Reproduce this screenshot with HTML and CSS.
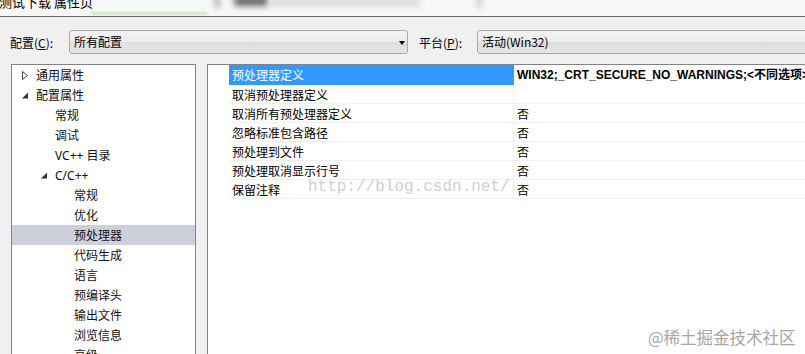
FILE: index.html
```html
<!DOCTYPE HTML>
<html>
<head>
    <title>测试下载 属性页</title>
    <link rel="stylesheet" href="styles.css">
</head>
<body>
    <div id="titlebar">
        <span class="title">测试下载 属性页</span>
        <span class="smudge s1"></span>
        <span class="smudge s2"></span>
        <span class="smudge s3"></span>
        <span class="smudge s4"></span>
        <span class="smudge green"></span>
    </div>

    <div id="configbar">
        <label class="lbl lbl-config">配置(<u>C</u>):</label>
        <div class="combo combo-config">
            <span>所有配置</span>
            <i class="arrow"></i>
        </div>
        <label class="lbl lbl-platform">平台(<u>P</u>):</label>
        <div class="combo combo-platform">
            <span>活动(Win32)</span>
            <i class="arrow"></i>
        </div>
    </div>

    <div id="main">
        <div id="tree">
            <div class="node lv1"><svg class="tri" width="8" height="9" viewBox="0 0 8 9"><path d="M1.5 0.5 L6.5 4.5 L1.5 8.5 Z" fill="none" stroke="#444" stroke-width="1"/></svg>通用属性</div>
            <div class="node lv1"><svg class="tri" width="8" height="9" viewBox="0 0 8 9"><path d="M7 1.5 L7 7.5 L1 7.5 Z" fill="#333"/></svg>配置属性</div>
            <div class="node lv2">常规</div>
            <div class="node lv2">调试</div>
            <div class="node lv2">VC++ 目录</div>
            <div class="node lv2 open"><svg class="tri" width="8" height="9" viewBox="0 0 8 9"><path d="M7 1.5 L7 7.5 L1 7.5 Z" fill="#333"/></svg>C/C++</div>
            <div class="node lv3">常规</div>
            <div class="node lv3">优化</div>
            <div class="node lv3 selected">预处理器</div>
            <div class="node lv3">代码生成</div>
            <div class="node lv3">语言</div>
            <div class="node lv3">预编译头</div>
            <div class="node lv3">输出文件</div>
            <div class="node lv3">浏览信息</div>
            <div class="node lv3">高级</div>
        </div>

        <div id="grid">
            <div class="row active">
                <div class="name">预处理器定义</div>
                <div class="value bold">WIN32;_CRT_SECURE_NO_WARNINGS;&lt;不同选项&gt;</div>
            </div>
            <div class="row">
                <div class="name">取消预处理器定义</div>
                <div class="value"></div>
            </div>
            <div class="row">
                <div class="name">取消所有预处理器定义</div>
                <div class="value">否</div>
            </div>
            <div class="row">
                <div class="name">忽略标准包含路径</div>
                <div class="value">否</div>
            </div>
            <div class="row">
                <div class="name">预处理到文件</div>
                <div class="value">否</div>
            </div>
            <div class="row">
                <div class="name">预处理取消显示行号</div>
                <div class="value">否</div>
            </div>
            <div class="row">
                <div class="name">保留注释</div>
                <div class="value">否</div>
            </div>
        </div>
    </div>

    <div class="mark-csdn">http://blog.csdn.net/</div>
    <div class="mark-juejin">@稀土掘金技术社区</div>
</body>
</html>
```

FILE: styles.css
```css
html, body {
    margin: 0;
    padding: 0;
    height: 100%;
    overflow: hidden;
}

body {
    background: #f0f0f0;
    font-family: "Noto Sans", "Noto Sans CJK SC", sans-serif;
    font-size: 12px;
    color: #000;
    position: relative;
}

#titlebar {
    height: 16px;
    border-bottom: 1px solid #6b6b6b;
    background: #f7f7f7;
    position: relative;
    overflow: hidden;
}

#titlebar .title {
    display: block;
    font-family: "Noto Sans CJK SC", sans-serif;
    font-size: 13px;
    line-height: 13px;
    margin-top: -5px;
    margin-left: -1px;
}

.smudge {
    position: absolute;
    filter: blur(3px);
    border-radius: 3px;
}

.s1 {
    left: 216px;
    top: -4px;
    width: 3px;
    height: 12px;
    background: #777;
}

.s2 {
    left: 234px;
    top: -4px;
    width: 34px;
    height: 10px;
    background: #666;
}

.s3 {
    left: 270px;
    top: -2px;
    width: 150px;
    height: 9px;
    background: #dcdcdc;
}

.s4 {
    left: 478px;
    top: -4px;
    width: 3px;
    height: 12px;
    background: #aaa;
}

.green {
    left: 90px;
    top: 12px;
    width: 118px;
    height: 3px;
    background: #cfe3c8;
    filter: blur(1px);
}

#configbar {
    display: flex;
    align-items: center;
    height: 24px;
    margin-top: 13px;
}

#configbar > * {
    flex-shrink: 0;
}

.lbl {
    font-family: "Noto Sans CJK SC", sans-serif;
    font-size: 12px;
}

.lbl-config {
    margin-left: 10px;
    width: 59px;
}

.lbl-platform {
    margin-left: 11px;
    width: 58px;
}

.combo {
    height: 22px;
    border: 1px solid #a8a8a8;
    border-radius: 3px;
    background: linear-gradient(#f3f3f3, #ebebeb 50%, #dddddd 51%, #e6e6e6);
    display: flex;
    align-items: center;
    padding-left: 4px;
    position: relative;
    box-sizing: content-box;
}

.combo span {
    font-family: "Noto Sans CJK SC", sans-serif;
    font-size: 12px;
    line-height: 22px;
}

.combo-config {
    width: 333px;
}

.combo-platform {
    width: 340px;
}

.arrow {
    position: absolute;
    right: 2px;
    top: 10px;
    border-left: 3.5px solid transparent;
    border-right: 3.5px solid transparent;
    border-top: 4px solid #000;
}

#main {
    display: flex;
    margin-top: 10px;
    height: 300px;
}

#tree {
    margin-left: 11px;
    width: 183px;
    flex-shrink: 0;
    border: 1px solid #828282;
    background: #fff;
    overflow: hidden;
}

.node {
    height: 20px;
    line-height: 21px;
    font-family: "Noto Sans", "Noto Sans CJK SC", sans-serif;
    font-size: 12px;
    white-space: nowrap;
    position: relative;
    color: #111;
}

.tri {
    position: absolute;
    top: 6px;
}

.lv1 {
    padding-left: 24px;
}

.lv1 .tri {
    left: 9px;
}

.lv2 {
    padding-left: 43px;
}

.lv2 .tri {
    left: 28px;
}

.lv3 {
    padding-left: 62px;
}

.selected {
    background: #cdd0dc;
}

#grid {
    margin-left: 11px;
    flex: 1;
    border: 1px solid #828282;
    border-right: none;
    background: #fff;
    padding-left: 21px;
    overflow: hidden;
}

.row {
    display: flex;
    height: 18px;
    border-bottom: 1px solid #efefef;
    line-height: 19px;
}

.row.active {
    height: 20px;
    line-height: 20px;
    border-bottom: none;
}

.name {
    width: 281px;
    padding-left: 3px;
    border-right: 1px solid #efefef;
    font-family: "Noto Sans CJK SC", sans-serif;
    font-size: 12px;
    white-space: nowrap;
    flex-shrink: 0;
}

.row.active .name {
    background: #3399ff;
    color: #fff;
    border-right-color: #3399ff;
}

.value {
    padding-left: 3px;
    font-family: "Noto Sans CJK SC", sans-serif;
    font-size: 12px;
    white-space: nowrap;
}

.value.bold {
    font-family: "Liberation Sans", "Noto Sans CJK SC", sans-serif;
    font-weight: bold;
    font-size: 12px;
}

.mark-csdn {
    position: absolute;
    left: 308px;
    top: 178px;
    font-family: "Liberation Mono", monospace;
    font-size: 16px;
    color: #cfcfcf;
}

.mark-juejin {
    position: absolute;
    left: 648px;
    top: 325px;
    font-family: "Noto Sans CJK SC", sans-serif;
    font-size: 16.5px;
    color: #a6a6a6;
}
```
